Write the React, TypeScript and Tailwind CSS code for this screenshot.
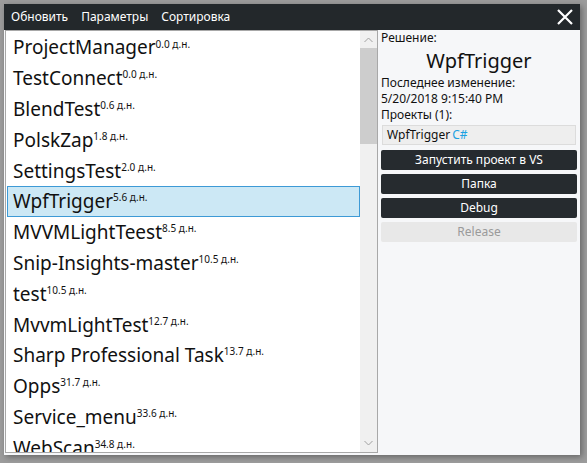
const projects: [string, string][] = [
  ["ProjectManager", "0.0"],
  ["TestConnect", "0.0"],
  ["BlendTest", "0.6"],
  ["PolskZap", "1.8"],
  ["SettingsTest", "2.0"],
  ["WpfTrigger", "5.6"],
  ["MVVMLightTeest", "8.5"],
  ["Snip-Insights-master", "10.5"],
  ["test", "10.5"],
  ["MvvmLightTest", "12.7"],
  ["Sharp Professional Task", "13.7"],
  ["Opps", "31.7"],
  ["Service_menu", "33.6"],
  ["WebScan", "34.8"],
];

function ProjectRow({ name, age, selected }: { name: string; age: string; selected?: boolean }) {
  return (
    <div
      className={
        "h-[30.8px] shrink-0 flex items-center pl-[5px] border " +
        (selected ? "bg-[#cce8f5] border-[#3d9ad6]" : "border-transparent")
      }
    >
      <span className="text-[19px] leading-none text-[#111]">{name}</span>
      <span className="text-[10px] leading-none self-start mt-[5px] text-[#111]">{age} д.н.</span>
    </div>
  );
}

export default function App() {
  return (
    <div
      className="w-[587px] h-[463px] bg-[#9c9c9c] pt-[4px] pl-[4px] overflow-hidden"
      style={{ fontFamily: '"Noto Sans", "Open Sans", sans-serif' }}
    >
      <div className="w-[576px] h-[451px] flex flex-col bg-[#f6f7f9] shadow-[2px_2px_6px_rgba(0,0,0,0.35)]">
        {/* title / menu bar */}
        <div className="h-[26px] shrink-0 bg-[#23282b] flex items-center pl-[7px] pr-[6px] text-white text-[12px]">
          <span className="mr-[13px]">Обновить</span>
          <span className="mr-[13px]">Параметры</span>
          <span>Сортировка</span>
          <svg className="ml-auto" width="18" height="18" viewBox="0 0 18 18">
            <path d="M2 2 L16 16 M16 2 L2 16" stroke="white" strokeWidth="2.2" />
          </svg>
        </div>

        <div className="flex flex-1 min-h-0 pb-[2px]">
          {/* list */}
          <div className="w-[373px] ml-[1px] border border-[#a8a8a8] bg-white flex overflow-hidden">
            <div className="flex-1 flex flex-col pl-[1px] pt-[1.5px] overflow-hidden">
              {projects.map(([n, a]) => (
                <ProjectRow key={n} name={n} age={a} selected={n === "WpfTrigger"} />
              ))}
            </div>
            <div className="w-[17px] bg-[#f0f0f0] flex flex-col items-center">
              <svg className="mt-[6px]" width="9" height="6" viewBox="0 0 9 6">
                <path d="M0.5 5 L4.5 1 L8.5 5" stroke="#a0a0a0" fill="none" />
              </svg>
              <div className="w-full h-[96px] mt-[5px] bg-[#cdcdcd]" />
              <svg className="mt-auto mb-[6px]" width="9" height="6" viewBox="0 0 9 6">
                <path d="M0.5 1 L4.5 5 L8.5 1" stroke="#a0a0a0" fill="none" />
              </svg>
            </div>
          </div>

          {/* details */}
          <div className="flex-1 pl-[3px] pr-[3px] text-[12px] text-[#111] flex flex-col">
            <div className="leading-[16px]">Решение:</div>
            <div className="text-[20px] leading-[28px] mt-[1px] text-center">WpfTrigger</div>
            <div className="leading-[16px]">Последнее изменение:</div>
            <div className="leading-[16px]">5/20/2018 9:15:40 PM</div>
            <div className="leading-[16px]">Проекты (1):</div>
            <div className="mt-[2px] mx-[1px] h-[20px] bg-[#eeeeee] border border-[#dcdcdc] flex items-center px-[4px]">
              WpfTrigger<span className="ml-[2px] text-[#1ba1e2]">C#</span>
            </div>
            <div className="mt-[5px] flex flex-col gap-[4px]">
              <button className="h-[20px] rounded-[2px] bg-[#262b2f] text-white">Запустить проект в VS</button>
              <button className="h-[20px] rounded-[2px] bg-[#262b2f] text-white">Папка</button>
              <button className="h-[20px] rounded-[2px] bg-[#262b2f] text-white">Debug</button>
              <button className="h-[20px] rounded-[2px] bg-[#e8e8e8] text-[#9a9a9a]">Release</button>
            </div>
          </div>
        </div>
      </div>
    </div>
  );
}
